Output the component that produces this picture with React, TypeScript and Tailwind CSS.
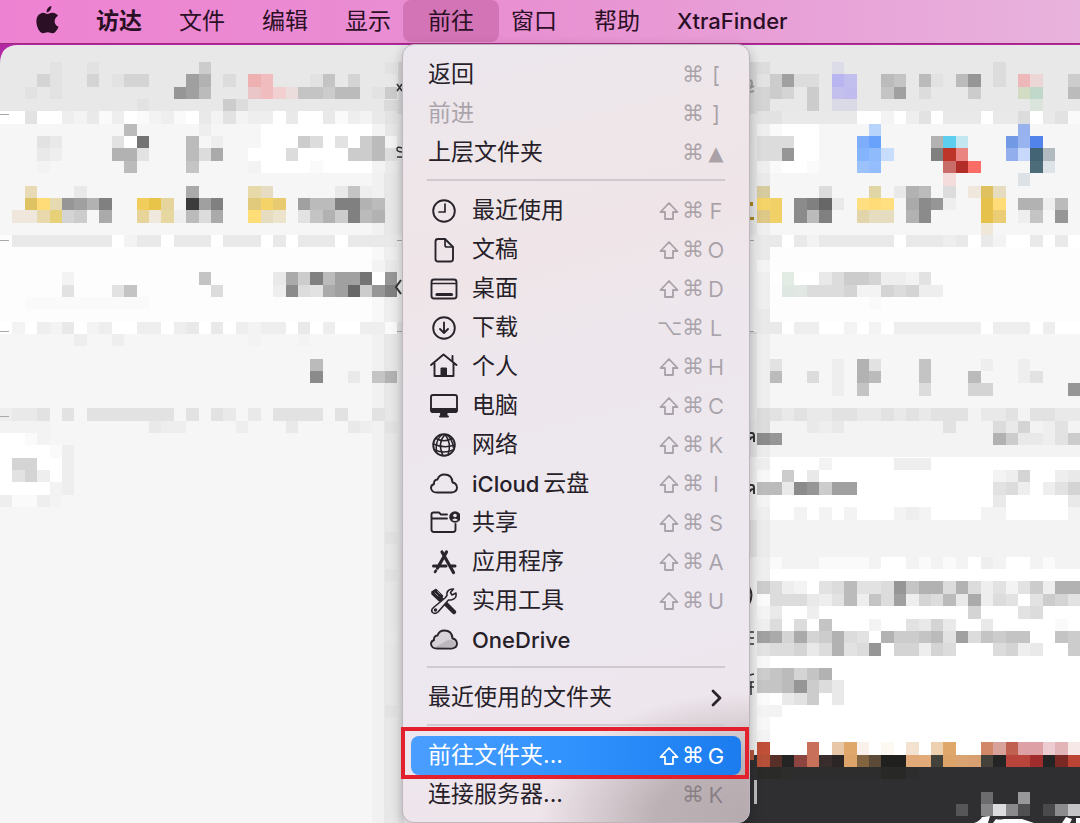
import type { ReactNode } from "react";

const CELL_W = 1080 / 87;
const CELL_H = 12.37;

// grey levels for the mosaic, from light to dark
const GREYS: Record<string, string> = {
  a: "#ffffff",
  b: "#fafafa",
  c: "#f3f3f3",
  d: "#eeeeee",
  e: "#e9e9e9",
  f: "#e2e2e2",
  g: "#dcdcdc",
  h: "#d4d4d4",
  i: "#cccccc",
  j: "#c4c4c4",
  k: "#bbbbbb",
  l: "#b2b2b2",
  m: "#aaaaaa",
  n: "#a0a0a0",
  o: "#969696",
  p: "#8b8b8b",
  q: "#808080",
  r: "#747474",
  s: "#676767",
  u: "#3c3c3c",
};

type Run = [row: number, col: number, cells: string];

// "." leaves the surface below visible
const GREY_RUNS: Run[] = [
  [5, 4, "f..f"],
  [5, 16, "i"],
  [5, 31, "f"],
  [6, 3, "hf..h.fgh"],
  [6, 10, "h"],
  [6, 15, "nl.g"],
  [6, 25, "fj.h"],
  [7, 2, "f.f"],
  [7, 14, "onk"],
  [7, 24, "jjikk.fi"],
  [8, 11, "f"],
  [8, 18, "ig"],
  [9, 0, "aafaadcebdabcdbaecfcddaeaaebdcef"],
  [10, 10, "k.....d"],
  [10, 21, "aaaaaaaaac"],
  [11, 3, "fe....far...k.d"],
  [11, 21, "aaaigafaikc"],
  [12, 3, "ed....llf...kgm"],
  [12, 20, "aaagaaaaiikg"],
  [13, 3, "c......k....j....caaaabaaaace"],
  [15, 6, "e........m"],
  [15, 27, "ejd"],
  [16, 5, "onlq"],
  [16, 15, "unq"],
  [16, 24, "nkkqqlk"],
  [17, 5, "hi.m"],
  [17, 14, "dkgm"],
  [17, 24, "fjliqkl"],
  [19, 1, "eeeeeeeeaceeaeeeaeeeaeaeeeaeeee"],
  [21, 30, "ce"],
  [22, 5, "c..........j.....emiqknnrao"],
  [23, 5, "f...fj......g....dpgfmnsioq"],
  [24, 2, "bbbbbbbbbb"],
  [26, 0, "acadceacdaaddadeaeadcddaeadaaddbf"],
  [27, 6, "d..d..........c...c"],
  [29, 25, "k"],
  [30, 25, "p..e.jl"],
  [33, 0, "deef.f.fffffff.f.fe.e.ffff.f..f"],
  [34, 0, "cccc........edd....d...e....ed.f"],
  [35, 0, "aabc"],
  [36, 0, "aaaabd"],
  [37, 0, "ahhaad"],
  [38, 0, "afhdad"],
  [39, 0, "aaaacd"],
  [40, 0, "dbbdc"],
  [43, 31, "f"],
  [46, 31, "f"],
  [51, 31, "e"],
  [57, 31, "f"],

  [5, 61, "g"],
  [5, 80, "g"],
  [6, 61, "fingg"],
  [6, 71, "kj.kf.ko.g"],
  [6, 86, "i"],
  [7, 61, "hih.i"],
  [7, 71, "jn.g...i"],
  [7, 86, "k"],
  [8, 61, "h...i"],
  [9, 61, "ffeeeeeeaacadfaeeeaeegaefb"],
  [10, 62, "baaa"],
  [11, 61, "gggaa"],
  [12, 61, "ggoaa"],
  [13, 62, "baab"],
  [14, 61, "e"],
  [11, 75, "l"],
  [12, 75, "q"],
  [15, 66, "g.....elk.g"],
  [16, 64, "pqse"],
  [16, 73, "mpod"],
  [16, 82, "lldk"],
  [17, 64, "pkq"],
  [17, 73, "lp"],
  [17, 82, "dj.o"],
  [19, 61, "eeaeceeeeeeaeeedeaecaaeaea"],
  [20, 61, "e"],
  [21, 61, "c"],
  [22, 61, "da"],
  [22, 64, "aaegiihddcf"],
  [23, 61, "d"],
  [23, 65, "ggghcchghdd"],
  [24, 61, "d........b"],
  [25, 61, "e"],
  [26, 61, "eeaddaacacadddddddadddadaa"],
  [29, 62, "f....d.lf...j....d..d"],
  [30, 62, "k..g.d.lk...j...k...df"],
  [31, 67, "d.j....g...hh......o"],
  [33, 61, "gfefeeffeefefefffceefcffee"],
  [34, 61, "g...ede........f...gehcdf"],
  [35, 61, "po.................lieedfi"],
  [37, 61, "d....c.....ddd"],
  [38, 63, "i.e..............cdh..de"],
  [39, 61, "kkepoinn...........fgd.dfh"],
  [40, 61, "c..................e.....e"],
  [41, 61, "d..c.c.c...cdc....cc.....c"],
  [45, 61, "dbcccbbbbcaacbcbcadcaacbcc"],
  [46, 61, "d"],
  [47, 61, "igdcafgkffgojllglgdfcfidll"],
  [48, 61, "bgggedfkdjgndhgkemdgfafihf"],
  [49, 61, "ce..d............h...fg"],
  [50, 61, "dg.g.j...c..fehe..e.....b"],
  [51, 61, "nmhmhilgfaliijkfngjijj..ji"],
  [52, 61, "fgghegl" + "fgo.hhdhg...ghde..i"],
  [54, 61, "ijkhjl"],
  [55, 61, "jjkoige"],
  [56, 61, "b.efi.e"],
  [57, 61, "cc"],
  [59, 61, "c"],
];

const TINT_RUNS: Run[] = [
  [6, 20, "#efb0b2 #f0bcbe"],
  [7, 20, "#eac6c8 #f0bcbe #f2d0d1 #ecdddd"],
  [15, 2, "#e8dab4"],
  [15, 20, "#e8daa8 #e6dcc2"],
  [16, 2, "#dfc262 #ffdc78 #e6dab2"],
  [16, 11, "#f1cd5c #e8c448 #e5d59c"],
  [16, 20, "#e2ca7c #f4d468 #e8cb70"],
  [17, 1, "#efe7dc #efe7dc #e7d9ac #e6d178"],
  [17, 11, "#e7d498 #efe8dc #e7d8a2"],
  [17, 20, "#ffde78 #e6dcc0 #ece3cc"],
  [5, 67, "#dcdce8"],
  [6, 67, "#b9b5f0 #c2bfee"],
  [7, 67, "#c3c0ee #c0bdee"],
  [8, 67, "#d9dae6 #d9dae6"],
  [6, 82, "#eeb8ba #ecd6d6"],
  [7, 82, "#d2dcc2 #bfd8ca"],
  [8, 83, "#dae4dc"],
  [10, 70, "#b8d4fb"],
  [10, 82, "#98b2ee"],
  [11, 69, "#7eaefb #68a2fa"],
  [12, 69, "#84b4fd #8fbbfd #c8ddfc"],
  [13, 69, "#9cc2fc #94bdfd"],
  [11, 76, "#5dceee #c2e7f0"],
  [12, 76, "#bd3429 #ea8480"],
  [13, 76, "#c86c6a #b22d28 #fa6d67"],
  [14, 76, "#f4dcdc"],
  [11, 81, "#7299e4 #98b3ee #5283ea"],
  [12, 81, "#92aeec #c8d8fa #436474 #b1babf"],
  [13, 83, "#4c6c7a #dee3e7"],
  [14, 82, "#dde2e6"],
  [15, 61, "#d6cb9e"],
  [15, 70, "#e0d5a4"],
  [15, 78, "#f0e8dc #dfc25f #e6dcc0"],
  [16, 61, "#f4d468 #f2d068"],
  [16, 69, "#ffdf80 #ffdc78 #ffdf80"],
  [16, 79, "#e6c24c #ffdc78"],
  [17, 61, "#dec888 #f2d068"],
  [17, 69, "#e2d5ac #e6dcc0 #e6dcc0"],
  [17, 79, "#e6c24c #eacd74"],
  [18, 79, "#efe8d8"],
  [22, 63, "#e3ebe5"],
  [23, 63, "#dfe7e2 #e1e8e3"],
  [60, 61, "#c04f38"],
  [60, 65, "#c8705a"],
  [60, 67, "#e8c6a8 #dfa76a #faf2ea"],
  [60, 71, "#fcf8f2"],
  [60, 73, "#f3e2d0"],
  [60, 75, "#ecd0b0 #dfa76a"],
  [60, 79, "#d08868 #d8a29a #c06050 #dda1a5 #dda1a5 #ecccd0 #e2b4b8 #f6e8e6"],
  [61, 61, "#b44f38 #552f28 #242424 #8b4440 #c8705a #382c2c #2b2525 #dca468 #836440 #5c4a38 #20201e #20201e #e2aa78 #e2aa78 #42413a #dca468 #daa472 #d8a070 #44413a #242424 #b8443c #b8443c #a02c2c #242424 #7a2824 #bc4434"],
  [62, 61, "#2a2a28 #2a2a28 #2d2d2b #2d2d2d #2d2d2d #2d2d2d #2d2d2d #2d2d2d #2d2d2d #2d2d2d #282826 #282826 #2d2d2d"],
  [64, 79, "#6c6c6e #2f2f31 #2f2f31 #98989a"],
  [65, 77, "#565658 #2f2f31 #868688 #dcdcde #8a8a8c #505052 #2f2f31 #4a4a4c #8c8c8e #c4c4c6"],
];

const Cells = ({ run }: { run: Run }) => {
  const [row, col, cells] = run;
  const colours = cells.startsWith("#")
    ? cells.split(" ")
    : cells.split("").map((c) => GREYS[c]);

  return (
    <>
      {colours.map((fill, i) => {
        if (!fill) return null;
        const x = Math.round((col + i) * CELL_W);
        const y = Math.round(row * CELL_H);
        return (
          <rect
            key={i}
            x={x}
            y={y}
            width={Math.round((col + i + 1) * CELL_W) - x}
            height={Math.round((row + 1) * CELL_H) - y}
            fill={fill}
          />
        );
      })}
    </>
  );
};

// Blurred-out Finder windows behind the menu
const Backdrop = () => (
  <svg
    className="absolute inset-0 h-full w-full"
    viewBox="0 0 1080 823"
    preserveAspectRatio="xMinYMin slice"
    aria-hidden="true"
  >
    <rect width="1080" height="823" fill="#b127a4" />
    <path d="M0 823V64Q0 45 18 45H1080V823Z" fill="#e8e8e8" />
    <g shapeRendering="crispEdges">
      <rect y="114" width="1080" height="126" fill="#f6f6f6" />
      <rect y="235" width="1080" height="97" fill="#fdfdfd" />
      <rect y="334" width="1080" height="489" fill="#f6f6f6" />
      <rect x="580" y="420" width="500" height="37" fill="#f3f3f3" />
      <rect x="580" y="457" width="500" height="63" fill="#ffffff" />
      <rect x="580" y="520" width="500" height="37" fill="#f3f3f3" />
      <rect x="580" y="557" width="500" height="198" fill="#ffffff" />
      <rect x="580" y="755" width="500" height="68" fill="#2f2f31" />
      <rect x="372" y="124" width="12" height="699" fill="#000" opacity="0.02" />
      <rect x="384" y="100" width="14" height="723" fill="#000" opacity="0.06" />
      <rect x="398" y="62" width="6" height="761" fill="#000" opacity="0.07" />
      <rect x="750" y="62" width="7" height="693" fill="#000" opacity="0.07" />
      <rect x="757" y="124" width="13" height="631" fill="#000" opacity="0.03" />
      {GREY_RUNS.map((run, i) => (
        <Cells key={i} run={run} />
      ))}
      {TINT_RUNS.map((run, i) => (
        <Cells key={i} run={run} />
      ))}
      <path d="M0 114.500H9M0 240.500H9M397 240.500H404M0 331.500H9M397 331.500H404M0 416.500H9M750 240.500H754M750 331.500H754" stroke="#a8a8a8" />
      <path d="M750 202H753V206H750M750 217H754V220H750" fill="#a8861c" />
      <rect x="750" y="750" width="4" height="10" fill="#b4573c" />
      <rect x="754" y="780" width="3" height="24" fill="#bdbdbf" />
    </g>
    <path d="M974 823Q980 821 982 817L990 816L988 823ZM993 823L996 819Q998 820 1004 819L1022 819L1034 823ZM1062 823L1066 817L1072 819L1070 823ZM1076 823V818H1080V823Z" fill="#fff" />
    {/* letter edges that peek out beside the menu */}
    <g fill="none" stroke="#333" strokeWidth="2">
      <path d="M397 84l5 7M402 84l-5 7M402 148q-5-2-5 1t5 3M402 157h-5" strokeWidth="1.500" />
      <path d="M401 280l-5 7l5 7" />
      <path d="M750 80q4 2 0 8l4-2M750 92l4-1" stroke="#999" />
      <path d="M749 433h3q2 0 2 3v6M754 437q-4 0-4 3M749 485h3q2 0 2 3v6M754 489q-4 0-4 3" />
      <path d="M749 587q5 8 0 17" />
      <path d="M750 632h4M750 638h4M750 644h4M750 675l4-1M750 682h4M750 687h4M751 682v13" strokeWidth="1.500" />
    </g>
  </svg>
);

const Icon = ({ children }: { children: ReactNode }) => (
  <svg
    className="h-8 w-8 shrink-0"
    viewBox="0 0 32 32"
    fill="none"
    stroke="#29242b"
    strokeWidth="1.900"
    strokeLinecap="round"
    strokeLinejoin="round"
    aria-hidden="true"
  >
    {children}
  </svg>
);

const CLOUD = "M9 24.500H23.500Q29 24 29 19.500Q28.500 15 24.500 14.500Q24 6.500 16.500 6.500Q11 6.500 9.500 11.500Q5.500 12 6 16Q3 17 3 20Q3.500 24.500 9 24.500Z";

const icons: Record<string, ReactNode> = {
  recent: (
    <Icon>
      <circle cx="16" cy="16" r="10.800" />
      <path d="M17 9V17H11" strokeWidth="1.700" />
    </Icon>
  ),
  document: (
    <Icon>
      <path d="M10 5H17L25 13V25Q25 27.500 22.500 27.500H10Q7.500 27.500 7.500 25V7.500Q7.500 5 10 5Z" />
      <path d="M17 5V11Q17 13 19 13H25" strokeWidth="1.700" />
    </Icon>
  ),
  desktop: (
    <Icon>
      <rect x="3.500" y="6.500" width="25" height="19" rx="2.500" />
      <path d="M4 10.500H28" strokeWidth="1.500" />
      <path d="M9 21.500H23.500" strokeWidth="3.200" />
    </Icon>
  ),
  downloads: (
    <Icon>
      <circle cx="16" cy="16" r="10.800" />
      <path d="M16 10.500V21M12 17L16 21L20 17" />
    </Icon>
  ),
  home: (
    <Icon>
      <path d="M3 14L15.500 3.500L28.500 14M6.500 12V25H25.500V12M24.500 5V10" />
      <path d="M13 25V17H18.500V25Z" fill="#29242b" strokeWidth="1" />
    </Icon>
  ),
  computer: (
    <Icon>
      <rect x="3" y="5" width="26" height="17" rx="2" />
      <path d="M3 18.500H29V21Q29 22.500 27 22.500H5Q3 22.500 3 21ZM13 22.500H19V26H13Z" fill="#29242b" strokeWidth="1" />
      <path d="M12 26.500H20" />
    </Icon>
  ),
  network: (
    <Icon>
      <circle cx="16" cy="16" r="10.800" />
      <g strokeWidth="1.500">
        <path d="M17 5.500Q9 14 15 26.500M17 5.500Q24 14 20 26M14 5.500Q7 11 8.500 23.500M19 6Q24 9 25.500 19" />
        <path d="M8 9.500Q16 14 24 9.500M5.500 15Q16 20 26.500 16M7 21Q16 25 25 21" />
      </g>
    </Icon>
  ),
  cloud: (
    <Icon>
      <path d={CLOUD} />
    </Icon>
  ),
  shared: (
    <Icon>
      <path d="M19 7.500H13L11 5.500H5.500Q3.500 5.500 3.500 7.500V22.500Q3.500 25 6 25H25Q27.500 25 27.500 22.500V17M3.500 11.500H19" />
      <circle cx="27" cy="10" r="5.800" fill="#29242b" stroke="none" />
      <circle cx="27" cy="8.500" r="1.800" fill="#ede7ed" stroke="none" />
      <path d="M24 13Q27 10 30 13Q27 15 24 13Z" fill="#ede7ed" stroke="none" />
    </Icon>
  ),
  apps: (
    <Icon>
      <path d="M18.500 6L9.500 22M14 6L25.500 26.500" strokeWidth="3.200" />
      <path d="M5.500 20H18M23 20H27" strokeWidth="3" />
      <path d="M8 24.500L7 26" strokeWidth="2.500" />
    </Icon>
  ),
  tools: (
    <Icon>
      <path d="M4 7L8 4.500L14.500 11L11.500 16L4 9Z" fill="#29242b" strokeWidth="1.500" />
      <path d="M12 13L26 27" strokeWidth="4.500" />
      <path d="M17 13L19 10.500Q18 5.500 23 4.200L25.500 4L22.500 7.500L24 10L28 8Q29 14 23 15L20.500 15L10 27Q7 29.500 4.500 27.500Q2.500 25 5.500 22.500Z" fill="#ede7ed" strokeWidth="1.600" />
      <circle cx="7.500" cy="25" r="0.800" />
      <path d="M7 8L10 11M9.500 6.500L12 9" stroke="#aaa4ab" strokeWidth="0.800" />
    </Icon>
  ),
  onedrive: (
    <Icon>
      <path d={CLOUD} fill="#d6d2d7" />
      <path d="M7 23L20 16Q25 15 28 19.500Q27 23 23.500 23.500Z" fill="#bdb8be" stroke="none" />
    </Icon>
  ),
};

interface MenuItem {
  label: string;
  latin?: string;
  icon?: string;
  keys?: string;
  disabled?: boolean;
  active?: boolean;
  submenu?: boolean;
}

const groups: MenuItem[][] = [
  [
    { label: "返回", keys: " ⌘[" },
    { label: "前进", keys: " ⌘]", disabled: true },
    { label: "上层文件夹", keys: " ⌘▲" },
  ],
  [
    { label: "最近使用", icon: "recent", keys: "⇧⌘F" },
    { label: "文稿", icon: "document", keys: "⇧⌘O" },
    { label: "桌面", icon: "desktop", keys: "⇧⌘D" },
    { label: "下载", icon: "downloads", keys: "⌥⌘L" },
    { label: "个人", icon: "home", keys: "⇧⌘H" },
    { label: "电脑", icon: "computer", keys: "⇧⌘C" },
    { label: "网络", icon: "network", keys: "⇧⌘K" },
    { latin: "iCloud", label: "云盘", icon: "cloud", keys: "⇧⌘I" },
    { label: "共享", icon: "shared", keys: "⇧⌘S" },
    { label: "应用程序", icon: "apps", keys: "⇧⌘A" },
    { label: "实用工具", icon: "tools", keys: "⇧⌘U" },
    { latin: "OneDrive", label: "", icon: "onedrive" },
  ],
  [{ label: "最近使用的文件夹", submenu: true }],
  [
    { label: "前往文件夹...", keys: "⇧⌘G", active: true },
    { label: "连接服务器...", keys: " ⌘K" },
  ],
];

const ShiftIcon = () => (
  <svg className="mx-auto h-5 w-5" viewBox="0 0 20 20" fill="none" stroke="currentColor" strokeWidth="1.800" strokeLinejoin="round" role="img" aria-label="Shift">
    <path d="M10 2L18.500 11H14V18H6V11H1.500Z" />
  </svg>
);

const Shortcut = ({ keys, active }: { keys: string; active?: boolean }) => (
  <kbd
    className={`ml-auto grid grid-cols-[24px_24px_22px] items-center text-center leading-none ${
      active ? "text-white" : "text-[#2b1f2d]/35"
    }`}
  >
    {keys.split("").map((key, i) =>
      key === "⇧" ? (
        <ShiftIcon key={i} />
      ) : (
        <span
          key={i}
          className={
            i < 2
              ? "font-['DejaVu_Sans'] text-[22px]"
              : key === "▲"
                ? "font-['DejaVu_Sans'] text-xl leading-none"
                : "font-[Inter,sans-serif] text-[22px]"
          }
        >
          {key}
        </span>
      )
    )}
  </kbd>
);

const MenuRow = ({ item }: { item: MenuItem }) => (
  <li className="relative" role="none">
    <button
      type="button"
      role="menuitem"
      disabled={item.disabled}
      className={`flex h-[39px] w-full items-center gap-3 rounded-lg pl-[17px] pr-[14px] text-left ${
        item.active
          ? "bg-linear-to-r from-[#4a9eff] via-[#2f92fd] to-[#1a7cee] text-white"
          : item.disabled
            ? "text-[#aba4ac]"
            : "text-[#262028]"
      }`}
    >
      {item.icon && icons[item.icon]}
      <span className="flex items-center gap-1 whitespace-nowrap text-[23px] leading-none">
        {item.latin && <span className="text-[22px] font-medium">{item.latin}</span>}
        {item.label}
      </span>
      {item.keys && <Shortcut keys={item.keys} active={item.active} />}
      {item.submenu && (
        <svg className="ml-auto h-5 w-5" viewBox="0 0 20 20" fill="none" stroke="#29242b" strokeWidth="2.800" strokeLinecap="round" strokeLinejoin="round" aria-hidden="true">
          <path d="M6 3L13 10L6 17" />
        </svg>
      )}
    </button>
    {item.active && (
      <div className="pointer-events-none absolute -left-[10px] -right-2 -top-[9px] -bottom-1 border-4 border-[#e3202d]" />
    )}
  </li>
);

const GoMenu = () => (
  <div
    role="menu"
    aria-label="前往"
    className="absolute -left-px top-[44px] w-[348px] rounded-xl border border-[#bdb6be] bg-[#ede7ed] bg-[radial-gradient(ellipse_210px_130px_at_100%_100%,#b5abaf_0%,#bcb2b6_45%,transparent_100%),linear-gradient(165deg,#ebe7ee_0%,#eee6e9_16%,#efe5e8_28%,#ede7ed_40%,#ede7ef_75%,#efe4e9_100%)] px-2 pb-2 pt-[10px] shadow-[0_4px_12px_rgba(0,0,0,0.25)]"
  >
    {groups.map((group, i) => (
      <div key={i}>
        {i > 0 && (
          <div className="h-[19px] px-4 pt-[7px]">
            <hr className="h-[2px] w-full border-0 bg-[#d0c9d0]" />
          </div>
        )}
        <ul role="none">
          {group.map((item) => (
            <MenuRow key={item.icon ?? item.label} item={item} />
          ))}
        </ul>
      </div>
    ))}
  </div>
);

const barItems = ["访达", "文件", "编辑", "显示", "前往", "窗口", "帮助", "XtraFinder"];

export default function App() {
  return (
    <div className="relative min-h-screen overflow-hidden font-[Inter,'Noto_Sans_CJK_SC',sans-serif]">
      <Backdrop />
      <header className="relative z-10 flex h-11 items-start border-b border-[#a3277f] bg-linear-to-r from-[#ee82d2] via-[#e891d2] to-[#e8b3dd] text-[#2a0f25]">
        <button type="button" aria-label="Apple" className="ml-[35px] mt-1 h-8 w-6">
          <svg viewBox="0 0 24 32" fill="#2a0f25" aria-hidden="true">
            <path d="M16.300 2C16.700 5 14.200 8.300 11.600 8.500C11.200 5.500 13.600 2.500 16.300 2Z" />
            <path d="M12.200 10C13.500 10 15 8.600 17.500 8.700C20 8.800 22 10 23 11.700C18 15 19 21 23.600 22.700C22.500 25.500 20 29.200 17.600 29.200C15.800 29.200 15 28.200 12.700 28.200C10.400 28.200 9.500 29.200 7.800 29.200C4.500 29 1.400 22.500 1.400 17.500C1.400 12 4.700 8.800 8.200 8.700C10 8.700 11.300 10 12.200 10Z" />
          </svg>
        </button>
        <nav className="ml-3 flex" aria-label="菜单栏">
          {barItems.map((label, i) => {
            const open = label === "前往";
            return (
              <div key={label} className={i > 0 ? "relative -ml-[13px]" : "relative"}>
                <button
                  type="button"
                  className={`h-[42px] whitespace-nowrap rounded-lg px-[25px] leading-none ${
                    open ? "bg-[#d274b5]" : ""
                  } ${i === 0 ? "font-bold" : ""} ${label === "XtraFinder" ? "text-[22px] font-medium" : "text-[23px]"}`}
                >
                  {label}
                </button>
                {open && <GoMenu />}
              </div>
            );
          })}
        </nav>
      </header>
    </div>
  );
}
